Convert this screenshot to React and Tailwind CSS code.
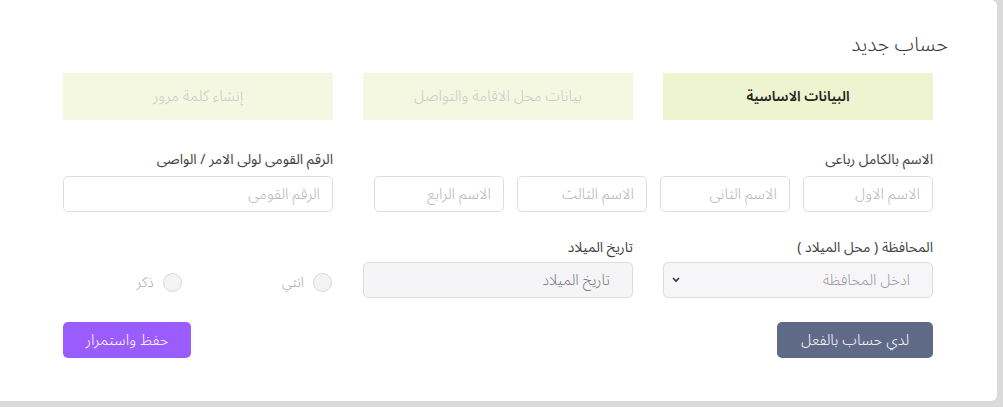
import React from 'react'

const font = { fontFamily: '"Noto Sans Arabic", "DejaVu Sans", "Noto Sans", sans-serif' }

function Tab({ label, active }) {
  return (
    <div
      className={
        'h-[47px] flex items-center justify-center ' +
        (active ? 'bg-[#eef4cf] text-[#222] text-[14px] font-semibold' : 'bg-[#f4f8e1] text-[#c9c9c4] text-[15px] font-light')
      }
    >
      {label}
    </div>
  )
}

function TextBox({ placeholder, className = '' }) {
  return (
    <input
      type="text"
      placeholder={placeholder}
      className={
        'h-[36px] rounded-[5px] border border-[#dedede] bg-white px-3 text-[15px] font-light text-[#333] placeholder:text-[#b5b5b5] outline-none ' +
        className
      }
    />
  )
}

function Radio({ label }) {
  return (
    <label className="flex items-center gap-[9px] text-[14px] font-light text-[#aaa]">
      <span className="w-[19px] h-[19px] rounded-full border border-[#d8d8d8] bg-[#f3f3f5]" />
      {label}
    </label>
  )
}

export default function App() {
  return (
    <div className="h-[407px] w-[1003px] bg-[#dadada] overflow-hidden" style={font}>
      <div dir="rtl" className="w-[997px] h-[401px] bg-white rounded-r-[6px] px-[64px]">
        {/* العنوان */}
        <h1 className="pt-[31px] -mr-[15px] text-[20px] leading-[28px] text-[#333] font-light">حساب جديد</h1>

        {/* الخطوات */}
        <div className="grid grid-cols-3 gap-[30px] w-[870px] mt-[14px]">
          <Tab label="البيانات الاساسية" active />
          <Tab label="بيانات محل الاقامة والتواصل" />
          <Tab label="إنشاء كلمة مرور" />
        </div>

        {/* الاسم + الرقم القومى */}
        <div className="flex justify-between w-[870px] mt-[31px]">
          <div>
            <div className="text-[14px] leading-[18px] text-[#444] mb-[7px]">الاسم بالكامل رباعى</div>
            <div className="flex gap-[13px]">
              <TextBox placeholder="الاسم الاول" className="w-[130px]" />
              <TextBox placeholder="الاسم الثانى" className="w-[130px]" />
              <TextBox placeholder="الاسم الثالث" className="w-[130px]" />
              <TextBox placeholder="الاسم الرابع" className="w-[130px]" />
            </div>
          </div>
          <div>
            <div className="text-[14px] leading-[18px] text-[#444] mb-[7px]">الرقم القومى لولى الامر / الواصى</div>
            <TextBox placeholder="الرقم القومى" className="w-[270px]" />
          </div>
        </div>

        {/* المحافظة + تاريخ الميلاد + النوع */}
        <div className="grid grid-cols-3 gap-[30px] w-[870px] mt-[27px] items-end">
          <div>
            <div className="text-[14px] leading-[18px] text-[#444] mb-[5px]">المحافظة ( محل الميلاد )</div>
            <div className="relative">
              <select className="appearance-none w-full h-[36px] rounded-[5px] border border-[#dedede] bg-[#f6f6f8] pr-[22px] text-[15px] font-light text-[#999] outline-none">
                <option>ادخل المحافظة</option>
              </select>
              <svg className="absolute left-[8px] top-[14px]" width="10" height="8" viewBox="0 0 10 8">
                <path d="M2 2l3 3 3-3" fill="none" stroke="#333" strokeWidth="1.6" />
              </svg>
            </div>
          </div>
          <div>
            <div className="text-[14px] leading-[18px] text-[#444] mb-[5px]">تاريخ الميلاد</div>
            <input
              type="text"
              placeholder="تاريخ الميلاد"
              className="w-full h-[36px] rounded-[5px] border border-[#dedede] bg-[#f5f5f7] pr-[22px] text-[15px] font-light placeholder:text-[#777] outline-none"
            />
          </div>
          <div className="flex items-center gap-[100px] h-[36px] pt-[5px] pr-[1px]">
            <Radio label="انثي" />
            <Radio label="ذكر" />
          </div>
        </div>

        {/* الأزرار */}
        <div className="flex justify-between w-[870px] mt-[24px]">
          <button className="w-[156px] h-[36px] rounded-[5px] bg-[#5f6a89] text-white text-[15px] font-light">لدي حساب بالفعل</button>
          <button className="w-[128px] h-[36px] rounded-[5px] bg-[#9b5cfd] text-white text-[15px] font-light">حفظ واستمرار</button>
        </div>
      </div>
    </div>
  )
}
